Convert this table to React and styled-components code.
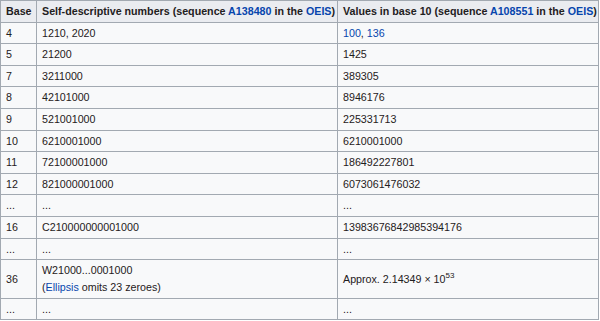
import React from "react";
import styled, { createGlobalStyle } from "styled-components";

const Global = createGlobalStyle`
  html, body { margin: 0; padding: 0; background: #ffffff; }
  body {
    font-family: "Liberation Sans", Arial, Helvetica, sans-serif;
    color: #202122;
  }
`;

const Table = styled.table`
  border-collapse: collapse;
  table-layout: fixed;
  width: 598px;
  background: #f8f9fa;
  border: 1px solid #a2a9b1;
  font-size: 10.7px;
  line-height: 14.6px;
  color: #1f2021;
`;

const Th = styled.th`
  background: #eaecf0;
  border: 1px solid #a2a9b1;
  padding: 3px 5px;
  font-weight: bold;
  text-align: center;
  white-space: nowrap;
  vertical-align: middle;
`;

const Td = styled.td`
  border: 1px solid #a2a9b1;
  padding: 3px 5px;
  text-align: left;
  vertical-align: middle;
  white-space: nowrap;
`;

const Link = styled.a`
  color: #0645ad;
  text-decoration: none;
`;

const Note = styled.span`
  display: block;
  margin-top: 2.5px;
`;

const Sup = styled.sup`
  font-size: 0.75em;
  line-height: 1;
  vertical-align: super;
`;

const rows = [
  ["4", "1210, 2020", <><Link href="#">100</Link>, <Link href="#">136</Link></>],
  ["5", "21200", "1425"],
  ["7", "3211000", "389305"],
  ["8", "42101000", "8946176"],
  ["9", "521001000", "225331713"],
  ["10", "6210001000", "6210001000"],
  ["11", "72100001000", "186492227801"],
  ["12", "821000001000", "6073061476032"],
  ["...", "...", "..."],
  ["16", "C210000000001000", "13983676842985394176"],
  ["...", "...", "..."],
  [
    "36",
    <>W21000...0001000<Note>(<Link href="#">Ellipsis</Link> omits 23 zeroes)</Note></>,
    <>Approx. 2.14349 × 10<Sup>53</Sup></>,
  ],
  ["...", "...", "..."],
];

export default function App() {
  return (
    <>
      <Global />
      <Table>
        <colgroup>
          <col style={{ width: 36 }} />
          <col style={{ width: 301 }} />
          <col style={{ width: 261 }} />
        </colgroup>
        <thead>
          <tr>
            <Th>Base</Th>
            <Th>
              Self-descriptive numbers (sequence <Link href="#">A138480</Link> in the{" "}
              <Link href="#">OEIS</Link>)
            </Th>
            <Th>
              Values in base 10 (sequence <Link href="#">A108551</Link> in the{" "}
              <Link href="#">OEIS</Link>)
            </Th>
          </tr>
        </thead>
        <tbody>
          {rows.map((r, i) => (
            <tr key={i}>
              <Td>{r[0]}</Td>
              <Td>{r[1]}</Td>
              <Td>{r[2]}</Td>
            </tr>
          ))}
        </tbody>
      </Table>
    </>
  );
}
